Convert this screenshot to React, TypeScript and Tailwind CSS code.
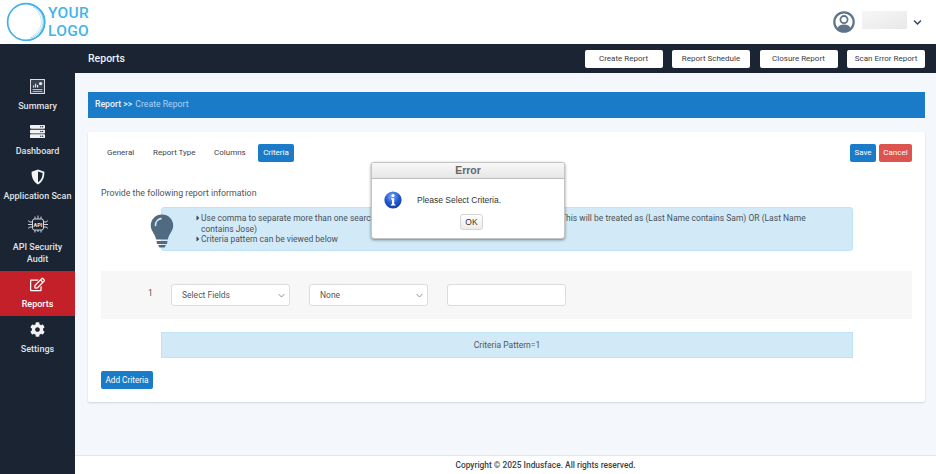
import React from "react";
import { FaServer, FaRegEdit, FaCog, FaChevronDown, FaCaretRight } from "react-icons/fa";

function Logo() {
  return (
    <svg width="44" height="44" viewBox="0 0 44 44" fill="none" className="block">
      <circle cx="21" cy="22" r="18.4" stroke="#3fb0ea" strokeWidth="1.7" />
      <path d="M24 4.5C35 6 40.5 14 40 23C39.5 33 31 40 22 40.4" stroke="#3fb0ea" strokeWidth="1.1" />
      <path d="M28 7C36 10 39 17 38 24C37 31 31 37 25 38" stroke="#8ed0f2" strokeWidth="0.9" />
      <path d="M31 10C36 14 37 20 36 25C35 30 31 34 28 36" stroke="#b5e0f6" strokeWidth="0.8" />
    </svg>
  );
}

function SummaryIcon() {
  return (
    <svg width="15" height="15" viewBox="0 0 15 15" fill="none">
      <rect x="0.6" y="0.6" width="13.8" height="13.8" stroke="#e4e6e9" strokeWidth="1.1" />
      <rect x="2" y="2" width="11" height="7.4" fill="#3a4552" />
      <path d="M3 8.6h1.2V6.4H3zM5 8.6h1.2V4.8H5zM7 8.6h1.2V6H7z" fill="#e4e6e9" />
      <circle cx="10.6" cy="4.6" r="1.7" fill="#e4e6e9" />
      <rect x="2.5" y="10.2" width="10" height="1" fill="#e4e6e9" />
      <rect x="2.5" y="12" width="10" height="1" fill="#aab0b7" />
    </svg>
  );
}

function ShieldIcon() {
  return (
    <svg width="14" height="16" viewBox="0 0 14 16">
      <path d="M7 0.5 13.4 2.8C13.6 8.5 11.6 13 7 15.5 2.4 13 .4 8.5.6 2.8Z" fill="#f1f2f4" />
      <path d="M7 2.5 11.6 4.1C11.6 8 10.2 11.3 7 13.3Z" fill="#1a2433" />
    </svg>
  );
}

function ApiIcon() {
  return (
    <svg width="22" height="21" viewBox="0 0 22 21" fill="none" stroke="#e4e6e9" strokeWidth="0.9">
      <rect x="5.5" y="5" width="11" height="11" rx="2" />
      <path d="M8 5V2.5M11 5V1.5M14 5V2.5M8 16v2.5M11 16v2M14 16v2.5M5.5 8H2.5L1.5 6.5M5.5 10.5H1M5.5 13H2.5L1.5 14.5M16.5 8h3l1-1.5M16.5 10.5H21M16.5 13h3l1 1.5" />
      <text x="11" y="12.6" textAnchor="middle" fontSize="5.5" fontWeight="700" fill="#e4e6e9" stroke="none" fontFamily="Roboto, sans-serif">API</text>
    </svg>
  );
}

function Bulb() {
  return (
    <svg width="24" height="34" viewBox="0 0 24 34" className="absolute left-[-12px] top-[6px]">
      <path d="M12 0.5C5.6 0.5 0.8 5.4 0.8 11.5C0.8 17 5 19.5 6.2 25.5H17.8C19 19.5 23.2 17 23.2 11.5C23.2 5.4 18.4 0.5 12 0.5Z" fill="#506a81" />
      <path d="M5.5 11.5C5.5 7.5 8.2 5 11 4.6" fill="none" stroke="#d2eaf7" strokeWidth="1.6" strokeLinecap="round" />
      <path d="M6.5 27H17.5L17 30H7Z" fill="#506a81" />
      <path d="M8 31H16L14.5 33.5H9.5Z" fill="#506a81" />
    </svg>
  );
}

function NavItem({ icon, label, active, tall }: { icon: React.ReactNode; label: React.ReactNode; active?: boolean; tall?: boolean }) {
  return (
    <div className={`flex flex-col items-center pt-[5px] text-center ${tall ? "h-[63px]" : "h-[45px]"} ${active ? "bg-[#c4202a] text-white" : "text-[#dfe2e6]"}`}>
      <div className={`flex items-center justify-center text-[#eceef0] ${tall ? "h-[23px]" : "h-[17px]"}`}>{icon}</div>
      <div className="mt-[5px] whitespace-nowrap text-[9px] font-medium leading-[12px]">{label}</div>
    </div>
  );
}

function TopButton({ children }: { children: React.ReactNode }) {
  return (
    <button className="flex h-[18px] w-[78px] items-center justify-center rounded-[2px] bg-white text-[8px] font-normal text-[#3a4048]">
      {children}
    </button>
  );
}

function Select({ label }: { label: string }) {
  return (
    <div className="flex h-[22px] w-[119px] items-center justify-between rounded-[3px] border border-[#dcdcdc] bg-white pl-[10px] pr-[4px] pt-[1px] text-[8.5px] text-[#555]">
      <span>{label}</span>
      <svg width="7" height="5" viewBox="0 0 7 5" fill="none" stroke="#777" strokeWidth="0.8">
        <path d="M.6 1 3.5 4 6.4 1" />
      </svg>
    </div>
  );
}

export default function App() {
  return (
    <div className="relative flex h-[474px] w-[936px] flex-col overflow-hidden bg-[#f4f8fd] font-['Roboto',sans-serif]">
      <header className="flex h-[44px] shrink-0 items-center justify-between bg-white pl-[5px] pr-[14px]">
        <div className="flex items-center">
          <Logo />
          <div className="-ml-[1px] text-[15.5px] font-medium leading-[18px] tracking-[0.3px] text-[#45b3e8]">
            <div>YOUR</div>
            <div>LOGO</div>
          </div>
        </div>
        <div className="flex items-center">
          <svg width="22" height="22" viewBox="0 0 22 22" className="mr-[7px]">
            <circle cx="11" cy="11" r="9.7" fill="none" stroke="#5f7488" strokeWidth="2.2" />
            <circle cx="11" cy="8.6" r="3.6" fill="none" stroke="#5f7488" strokeWidth="1.8" />
            <path d="M4.4 17.5C5.5 14.5 8 13.6 11 13.6S16.5 14.5 17.6 17.5C16 19.4 13.6 20.4 11 20.4S6 19.4 4.4 17.5Z" fill="#5f7488" />
          </svg>
          <div className="mb-[4px] mr-[6px] h-[18px] w-[45px] bg-gradient-to-br from-[#f7f7f7] to-[#e8e8e8]" />
          <FaChevronDown className="text-[9px] text-[#2e4560]" />
        </div>
      </header>

      <div className="flex h-[29px] shrink-0 items-center justify-between bg-[#1a2433] pl-[88px] pr-[11px]">
        <div className="pt-[1px] text-[10.5px] font-medium text-[#f0f1f3]">Reports</div>
        <div className="flex gap-[9.5px]">
          <TopButton>Create Report</TopButton>
          <TopButton>Report Schedule</TopButton>
          <TopButton>Closure Report</TopButton>
          <TopButton>Scan Error Report</TopButton>
        </div>
      </div>

      <div className="flex min-h-0 flex-1">
        <aside className="w-[75px] shrink-0 bg-[#1a2433]">
          <NavItem icon={<SummaryIcon />} label="Summary" />
          <NavItem icon={<FaServer className="text-[15px] text-[#f1f2f4]" />} label="Dashboard" />
          <NavItem icon={<ShieldIcon />} label="Application Scan" />
          <NavItem tall icon={<ApiIcon />} label={<>API Security<br />Audit</>} />
          <NavItem active icon={<FaRegEdit className="text-[15px] text-white" />} label="Reports" />
          <NavItem icon={<FaCog className="text-[15px] text-[#f1f2f4]" />} label="Settings" />
        </aside>

        <main className="flex min-w-0 flex-1 flex-col">
          <div className="flex-1 pl-[13px] pr-[11px] pt-[19px]">
            <div className="flex h-[26px] items-center bg-[#1a7cc8] pl-[7px] text-[8.7px] font-medium">
              <span className="text-[#eef5fb]">Report &gt;&gt;</span>
              <span className="ml-[3px] font-normal text-[#a9d4f2]">Create Report</span>
            </div>

            <section className="mt-[14px] h-[270px] rounded-[2px] bg-white px-[13px] pt-[12px] shadow-[0_1px_2px_rgba(90,110,130,0.25)]">
              <div className="flex h-[18px] items-center justify-between">
                <div className="flex items-center text-[8px] font-normal text-[#3f444c]">
                  <span className="ml-[6px] w-[46px]">General</span>
                  <span className="w-[61px]">Report Type</span>
                  <span className="w-[44px]">Columns</span>
                  <span className="flex h-[18px] w-[36px] items-center justify-center rounded-[2px] bg-[#1a7cc8] text-white">Criteria</span>
                </div>
                <div className="flex gap-[3px] text-[8px] font-normal text-white">
                  <span className="flex h-[18px] w-[26px] items-center justify-center rounded-[2px] bg-[#1a7cc8]">Save</span>
                  <span className="flex h-[18px] w-[33px] items-center justify-center rounded-[2px] bg-[#dc5350]">Cancel</span>
                </div>
              </div>

              <div className="mt-[25px] text-[8.8px] leading-[12px] text-[#4f545b]">Provide the following report information</div>

              <div className="relative ml-[60px] mr-[59px] mt-[8px] h-[44px] rounded-[3px] border border-[#bfe3f6] bg-[#d2eaf7] pl-[33px] pt-[5px] text-[8.5px] leading-[10.6px] text-[#4b5157]">
                <Bulb />
                <ul>
                  <li className="flex items-start">
                    <FaCaretRight className="mt-[1px] w-[6px] shrink-0 text-[8px] text-[#444]" />
                    <span>Use comma to separate more than one search value in a field, e.g. Last Name set to Sam, Jose. This will be treated as (Last Name contains Sam) OR (Last Name<br />contains Jose)</span>
                  </li>
                  <li className="flex items-start">
                    <FaCaretRight className="mt-[1px] w-[6px] shrink-0 text-[8px] text-[#444]" />
                    <span>Criteria pattern can be viewed below</span>
                  </li>
                </ul>
              </div>

              <div className="mt-[20px] flex h-[48px] items-center bg-[#f7f7f7]">
                <span className="mb-[3px] ml-[47px] w-[23px] text-[8.5px] text-[#555]">1</span>
                <div className="flex gap-[19px]">
                  <Select label="Select Fields" />
                  <Select label="None" />
                  <div className="h-[22px] w-[119px] rounded-[3px] border border-[#dcdcdc] bg-white" />
                </div>
              </div>

              <div className="ml-[60px] mr-[59px] mt-[13px] flex h-[26px] items-center justify-center border border-[#bfe3f6] bg-[#d2eaf7] text-[8.5px] text-[#555]">
                Criteria Pattern=1
              </div>

              <button className="mt-[13px] flex h-[18px] w-[52px] items-center justify-center rounded-[2px] bg-[#1a7cc8] text-[8.2px] font-normal text-white">
                Add Criteria
              </button>
            </section>
          </div>

          <footer className="flex h-[19px] shrink-0 items-center justify-center border-t border-[#e3e6ea] bg-white pl-[80px] text-[8.4px] font-medium text-[#3a3f46]">
            Copyright © 2025 Indusface. All rights reserved.
          </footer>
        </main>
      </div>

      <div className="absolute left-[371px] top-[162px] h-[77px] w-[194px] overflow-hidden rounded-[3px] border border-[#c4c4c4] bg-white shadow-[0_1px_3px_rgba(0,0,0,0.45)]">
        <div className="flex h-[16px] items-center justify-center border-b border-[#bdbdbd] bg-gradient-to-b from-[#f8f8f8] to-[#e6e6e6] font-['Liberation_Sans',sans-serif] text-[10.5px] font-bold text-[#666]">
          Error
        </div>
        <div className="flex items-center pl-[12px] pt-[12px]">
          <svg width="18" height="18" viewBox="0 0 18 18">
            <defs>
              <radialGradient id="g" cx="45%" cy="30%" r="75%">
                <stop offset="0" stopColor="#7fb0f5" />
                <stop offset="0.55" stopColor="#2256d0" />
                <stop offset="1" stopColor="#123a9c" />
              </radialGradient>
            </defs>
            <circle cx="9" cy="9" r="8.6" fill="url(#g)" />
            <circle cx="9" cy="4.6" r="1.5" fill="#fff" />
            <path d="M7 7.2h3.2v6h1.2v1.2H6.8v-1.2H8V8.4H7Z" fill="#fff" />
          </svg>
          <span className="ml-[15px] font-['Liberation_Sans',sans-serif] text-[8.5px] text-[#333]">Please Select Criteria.</span>
        </div>
        <button className="ml-[88px] mt-[5px] flex h-[16px] w-[23px] items-center justify-center rounded-[3px] border border-[#d4d4d4] bg-gradient-to-b from-white to-[#ececec] font-['Liberation_Sans',sans-serif] text-[8.5px] text-[#333]">
          OK
        </button>
      </div>
    </div>
  );
}
